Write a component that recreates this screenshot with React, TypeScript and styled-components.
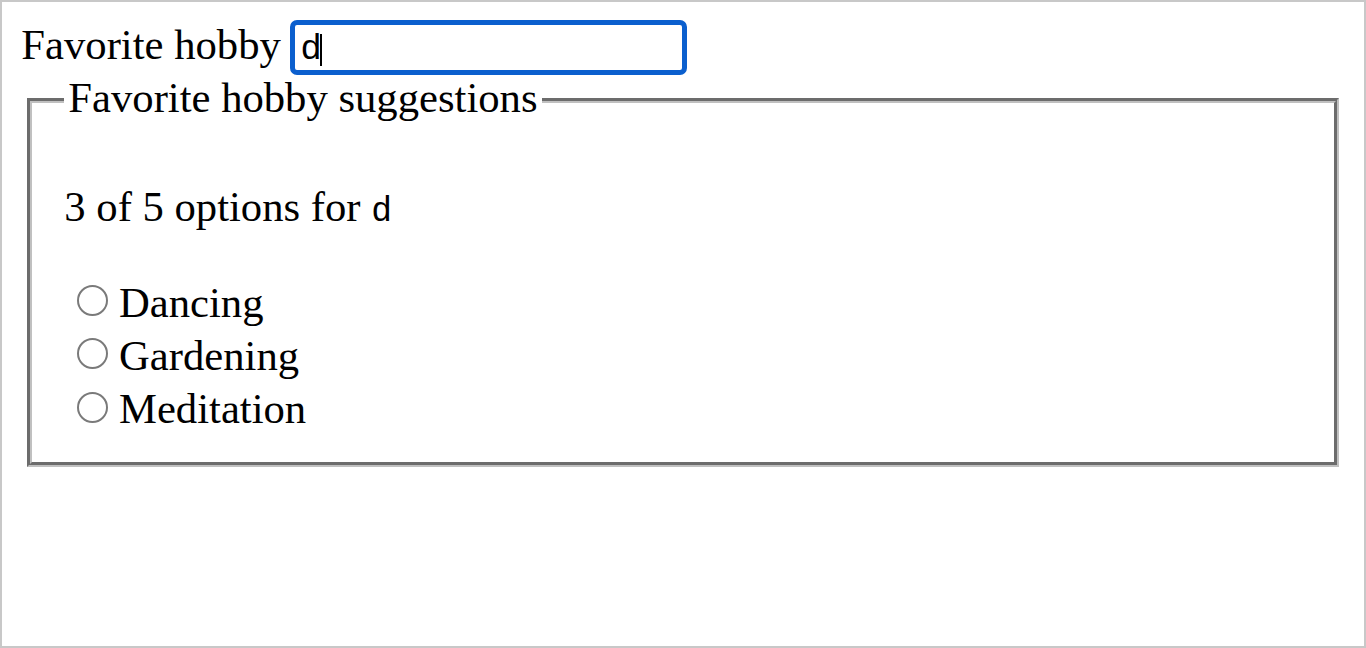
import React from "react";
import styled, { createGlobalStyle } from "styled-components";

const Global = createGlobalStyle`
  html, body { margin: 0; padding: 0; background: #ffffff; }
  body { font-family: "Liberation Serif", "Times New Roman", serif; color: #000; }
`;

const Frame = styled.div`
  box-sizing: border-box;
  width: 1366px;
  height: 648px;
  border: 2px solid #c8c8c8;
  padding: 18px 19.33px;
  font-size: 42.67px;
  font-family: "Liberation Serif", "Times New Roman", serif;
`;

const Row = styled.div`
  display: flex;
  align-items: baseline;
`;

const Label = styled.label`
  line-height: normal;
  margin-right: 9.5px;
`;

const Field = styled.div`
  box-sizing: border-box;
  width: 397px;
  height: 55px;
  border: 5px solid #0b5fce;
  border-radius: 7px;
  padding: 0 6px;
  font-family: "Liberation Sans", Arial, sans-serif;
  font-size: 35.55px;
  line-height: 45px;
  white-space: nowrap;
`;

const Caret = styled.span`
  display: inline-block;
  width: 2px;
  height: 32px;
  margin-left: -1px;
  background: #000;
  vertical-align: -7px;
`;

const Set = styled.fieldset`
  margin: -2px 5.33px 0;
  padding: 10px 32.67px 28px;
  border: 5px groove #c0c0c0;
  min-width: 0;
`;

const Legend = styled.legend`
  padding: 0 4px 6.8px;
  line-height: normal;
`;

const Summary = styled.p`
  margin: 43.67px 0 42.67px;
  line-height: normal;
`;

const Code = styled.code`
  font-family: "Liberation Mono", "Courier New", monospace;
  font-size: 34.67px;
`;

const Option = styled.div`
  line-height: normal;
`;

const Radio = styled.input`
  appearance: none;
  -webkit-appearance: none;
  box-sizing: border-box;
  display: inline-block;
  width: 31px;
  height: 31px;
  margin: 11.2px 11px 1px 12.7px;
  border: 2.5px solid #7a7a7a;
  border-radius: 50%;
  background: #fff;
  vertical-align: baseline;
`;

const options = ["Dancing", "Gardening", "Meditation"];

export default function App() {
  return (
    <>
      <Global />
      <Frame>
        <Row>
          <Label>Favorite hobby</Label>
          <Field role="textbox" aria-label="Favorite hobby">
            d<Caret />
          </Field>
        </Row>
        <Set>
          <Legend>Favorite hobby suggestions</Legend>
          <Summary>
            3 of 5 options for <Code>d</Code>
          </Summary>
          {options.map((o) => (
            <Option key={o}>
              <Radio type="radio" name="hobby" id={o} />
              <label htmlFor={o}>{o}</label>
            </Option>
          ))}
        </Set>
      </Frame>
    </>
  );
}
